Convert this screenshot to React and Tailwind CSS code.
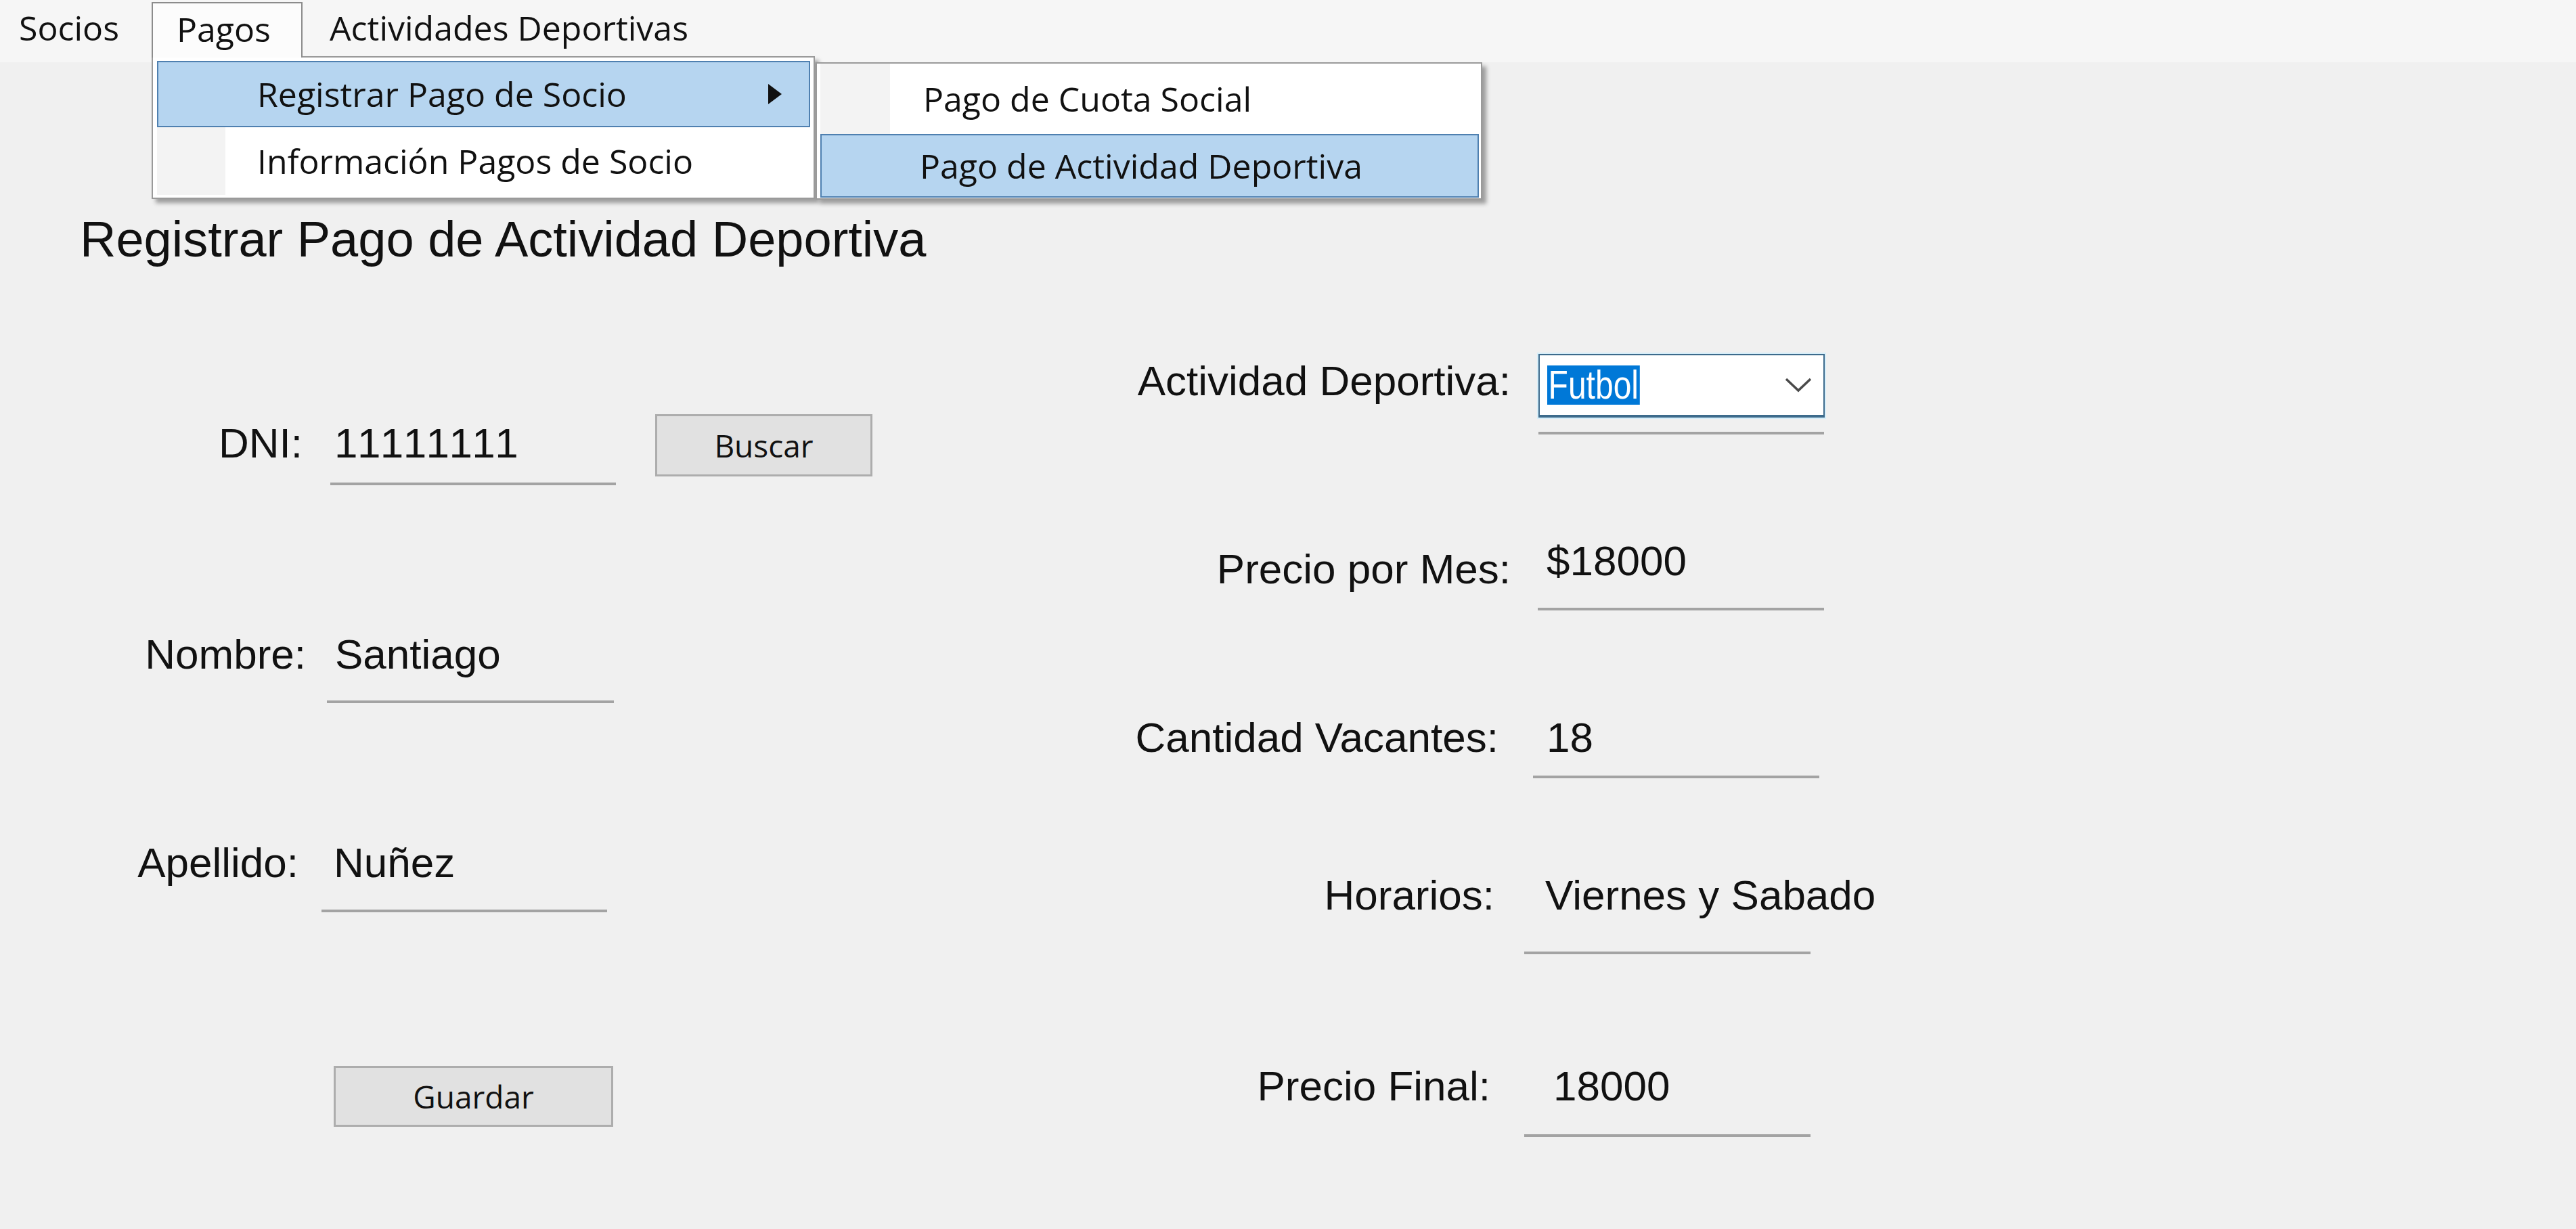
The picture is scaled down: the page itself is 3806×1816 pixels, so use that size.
import React from "react";

const arial = "font-['Liberation_Sans',Arial,sans-serif] text-[62px] leading-[62px] text-[#111] whitespace-nowrap";
const menuFont = "font-['Open_Sans','Noto_Sans',sans-serif] text-[50px] leading-[50px] text-[#111] whitespace-nowrap";
const btnFont = "font-['Open_Sans','Noto_Sans',sans-serif] text-[46px] leading-[46px] text-[#111] whitespace-nowrap";
const underline = "h-[4px] bg-[#a3a3a3]";
const btn = "flex items-center justify-center bg-[#e1e1e1] border-[3px] border-[#adadad]";

function Chevron() {
  return (
    <svg width="40" height="22" viewBox="0 0 40 22" className="shrink-0">
      <polyline points="2,2 20,19 38,2" fill="none" stroke="#4a4a4a" strokeWidth="3.5" />
    </svg>
  );
}

export default function App() {
  return (
    <div className="relative w-[3806px] h-[1816px] bg-[#f0f0f0] overflow-hidden">
      {/* Menu bar */}
      <div className="flex items-start h-[92px] bg-[#f6f6f6]">
        <div className={`${menuFont} w-[224px] pl-[28px] mt-[16px]`}>Socios</div>
        <div className={`${menuFont} relative z-30 w-[223px] h-[82px] mt-[3px] pt-[13px] pl-[35px] bg-[#fcfcfc] border-l-2 border-t-2 border-r-2 border-[#8c8c8c]`}>
          Pagos
        </div>
        <div className={`${menuFont} ml-[40px] mt-[16px]`}>Actividades Deportivas</div>
      </div>

      {/* Dropdown: Pagos */}
      <div className="absolute z-20 left-[224px] top-[83px] w-[980px] h-[211px] bg-white border-2 border-[#9a9a9a] shadow-[6px_6px_6px_rgba(0,0,0,0.35)] pt-[5px] pl-[6px] pr-[5px]">
        <div className={`${menuFont} flex items-center h-[98px] bg-[#b6d5f0] border-2 border-[#4f80b0] pl-[146px] text-[#0c1724]`}>
          <span>Registrar Pago de Socio</span>
          <svg width="20" height="30" viewBox="0 0 20 30" className="ml-auto mr-[40px]">
            <polygon points="0,0 20,15 0,30" fill="#111" />
          </svg>
        </div>
        <div className="flex h-[100px]">
          <div className="w-[101px] bg-[#f3f3f3]" />
          <div className={`${menuFont} flex items-center pl-[47px]`}>Información Pagos de Socio</div>
        </div>
      </div>

      {/* Submenu */}
      <div className="absolute z-20 left-[1205px] top-[92px] w-[985px] h-[203px] bg-white border-2 border-[#9a9a9a] shadow-[6px_6px_6px_rgba(0,0,0,0.35)] pl-[5px] pr-[3px]">
        <div className="flex h-[104px]">
          <div className="w-[103px] bg-[#f3f3f3]" />
          <div className={`${menuFont} flex items-center pl-[49px]`}>Pago de Cuota Social</div>
        </div>
        <div className={`${menuFont} flex items-center h-[94px] bg-[#b6d5f0] border-2 border-[#4f80b0] pl-[145px] text-[#0c1724]`}>
          Pago de Actividad Deportiva
        </div>
      </div>

      {/* Title */}
      <div className="pl-[118px] mt-[225px]">
        <div className="font-['Liberation_Sans',Arial,sans-serif] text-[74px] leading-[73px] text-[#111] whitespace-nowrap">
          Registrar Pago de Actividad Deportiva
        </div>
      </div>

      {/* Form */}
      <div className="flex">
        {/* Left column */}
        <div className="w-[1300px] flex flex-col">
          <div className="flex items-start mt-[234px]">
            <div className={`${arial} w-[447px] text-right`}>DNI:</div>
            <div className="ml-[41px] w-[422px] flex flex-col">
              <div className={`${arial} pl-[6px] tracking-[4px]`}>11111111</div>
              <div className={`${underline} mt-[27px]`} />
            </div>
            <div className={`${btn} ml-[58px] -mt-[12px] w-[321px] h-[92px]`}>
              <span className={btnFont}>Buscar</span>
            </div>
          </div>

          <div className="flex items-start mt-[219px]">
            <div className={`${arial} w-[452px] text-right`}>Nombre:</div>
            <div className="ml-[31px] w-[424px] flex flex-col">
              <div className={`${arial} pl-[12px]`}>Santiago</div>
              <div className={`${underline} mt-[37px]`} />
            </div>
          </div>

          <div className="flex items-start mt-[205px]">
            <div className={`${arial} w-[441px] text-right`}>Apellido:</div>
            <div className="ml-[34px] w-[422px] flex flex-col">
              <div className={`${arial} pl-[18px]`}>Nuñez</div>
              <div className={`${underline} mt-[38px]`} />
            </div>
          </div>

          <div className={`${btn} mt-[227px] ml-[493px] w-[413px] h-[90px]`}>
            <span className={btnFont}>Guardar</span>
          </div>
        </div>

        {/* Right column */}
        <div className="flex flex-col">
          <div className="flex items-start mt-[142px]">
            <div className={`${arial} w-[932px] text-right`}>Actividad Deportiva:</div>
            <div className="ml-[41px] -mt-[9px] flex flex-col">
              <div className="w-[423px] h-[94px] bg-white border-2 border-b-4 border-[#3d6b8c] shadow-[0_0_0_2px_#d6eef9] flex items-center pl-[11px] pr-[17px]">
                <span className="inline-block origin-left scale-x-[0.8] font-['Liberation_Sans',Arial,sans-serif] text-[60px] leading-[58px] bg-[#0078d7] text-white px-[2px] whitespace-nowrap">
                  Futbol
                </span>
                <span className="ml-auto">
                  <Chevron />
                </span>
              </div>
              <div className={`${underline} mt-[21px] w-[422px]`} />
            </div>
          </div>

          <div className="flex items-start mt-[168px]">
            <div className={`${arial} w-[932px] text-right`}>Precio por Mes:</div>
            <div className="ml-[40px] -mt-[12px] w-[423px] flex flex-col">
              <div className={`${arial} pl-[13px]`}>$18000</div>
              <div className={`${underline} mt-[38px]`} />
            </div>
          </div>

          <div className="flex items-start mt-[157px]">
            <div className={`${arial} w-[914px] text-right`}>Cantidad Vacantes:</div>
            <div className="ml-[51px] w-[423px] flex flex-col">
              <div className={`${arial} pl-[20px]`}>18</div>
              <div className={`${underline} mt-[25px]`} />
            </div>
          </div>

          <div className="flex items-start mt-[142px]">
            <div className={`${arial} w-[908px] text-right`}>Horarios:</div>
            <div className="ml-[44px] w-[423px] flex flex-col">
              <div className={`${arial} pl-[31px]`}>Viernes y Sabado</div>
              <div className={`${underline} mt-[52px]`} />
            </div>
          </div>

          <div className="flex items-start mt-[164px]">
            <div className={`${arial} w-[902px] text-right`}>Precio Final:</div>
            <div className="ml-[50px] w-[423px] flex flex-col">
              <div className={`${arial} pl-[43px]`}>18000</div>
              <div className={`${underline} mt-[40px]`} />
            </div>
          </div>
        </div>
      </div>
    </div>
  );
}
